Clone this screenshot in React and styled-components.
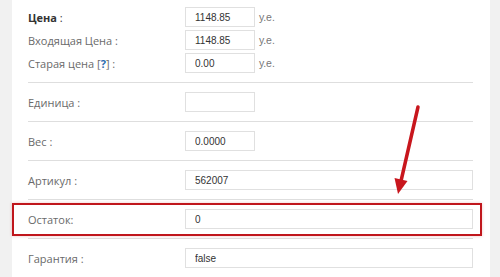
import React from 'react';
import styled, { createGlobalStyle } from 'styled-components';

const GlobalStyle = createGlobalStyle`
  html, body {
    margin: 0;
    padding: 0;
    background: #f1f1f1;
  }
  body {
    font-family: "Open Sans", "Liberation Sans", sans-serif;
  }
`;

const Page = styled.div`
  position: relative;
  width: 500px;
  height: 277px;
  overflow: hidden;
  background: #f1f1f1;
`;

const Panel = styled.div`
  margin-left: 12px;
  width: 478px;
  height: 277px;
  box-sizing: border-box;
  background: #fff;
  padding: 0 17px 0 16px;
`;

const PriceGroup = styled.div`
  display: flex;
  flex-direction: column;
  gap: 3px;
  padding: 7px 0 9px;
  border-bottom: 1px solid #dedede;
`;

const PriceRow = styled.div`
  display: flex;
  align-items: center;
  height: 20px;
`;

const FieldRow = styled.div`
  position: relative;
  display: flex;
  align-items: center;
  padding: 9px 0 9px;
  border-bottom: 1px solid #dedede;

  ${(p) => p.$highlight && `
    &::before {
      content: '';
      position: absolute;
      left: -16px;
      right: -9px;
      top: 3px;
      bottom: 2px;
      border: 2px solid #c0161c;
      box-shadow: 0 0 3px rgba(192, 22, 28, 0.25);
      pointer-events: none;
    }
  `}
`;

const Label = styled.div`
  width: 157px;
  flex-shrink: 0;
  font-size: 11px;
  color: ${(p) => (p.$strong ? '#333' : '#6a6a6a')};
  font-weight: ${(p) => (p.$strong ? 700 : 400)};
  white-space: nowrap;
`;

const Colon = styled.span`
  font-weight: 400;
`;

const Help = styled.a`
  color: #2a6db0;
  font-weight: 700;
  text-decoration: none;
`;

const Input = styled.input`
  box-sizing: border-box;
  width: ${(p) => (p.$wide ? '288px' : '70px')};
  height: 20px;
  border: 1px solid #e0e0e0;
  padding: 0 9px;
  margin: 0;
  font-family: "Liberation Sans", Arial, sans-serif;
  font-size: 10px;
  color: #333;
  background: #fff;
  outline: none;
`;

const Unit = styled.span`
  margin-left: 4px;
  font-family: "Liberation Sans", Arial, sans-serif;
  font-size: 10.5px;
  color: #777;
`;

const Arrow = styled.svg`
  position: absolute;
  left: 0;
  top: 0;
  pointer-events: none;
`;

const prices = [
  { label: 'Цена', value: '1148.85', strong: true },
  { label: 'Входящая Цена', value: '1148.85' },
  { label: 'Старая цена', value: '0.00', help: true },
];

const fields = [
  { label: 'Единица :', value: '' },
  { label: 'Вес :', value: '0.0000' },
  { label: 'Артикул :', value: '562007', wide: true },
  { label: 'Остаток:', value: '0', wide: true, highlight: true },
  { label: 'Гарантия :', value: 'false', wide: true },
];

export default function App() {
  return (
    <>
      <GlobalStyle />
      <Page>
        <Panel>
          <PriceGroup>
            {prices.map((p) => (
              <PriceRow key={p.label}>
                <Label $strong={p.strong}>
                  {p.label}
                  {p.help && (
                    <> [<Help href="#">?</Help>]</>
                  )}
                  <Colon> :</Colon>
                </Label>
                <Input defaultValue={p.value} />
                <Unit>у.е.</Unit>
              </PriceRow>
            ))}
          </PriceGroup>
          {fields.map((f) => (
            <FieldRow key={f.label} $highlight={f.highlight}>
              <Label>{f.label}</Label>
              <Input $wide={f.wide} defaultValue={f.value} />
            </FieldRow>
          ))}
        </Panel>
        <Arrow width="500" height="277" viewBox="0 0 500 277">
          <line x1="418" y1="107" x2="401" y2="181" stroke="#c8161d" strokeWidth="3.5" strokeLinecap="round" />
          <polygon points="398,194 407.5,181 394.5,178" fill="#c8161d" />
        </Arrow>
      </Page>
    </>
  );
}
